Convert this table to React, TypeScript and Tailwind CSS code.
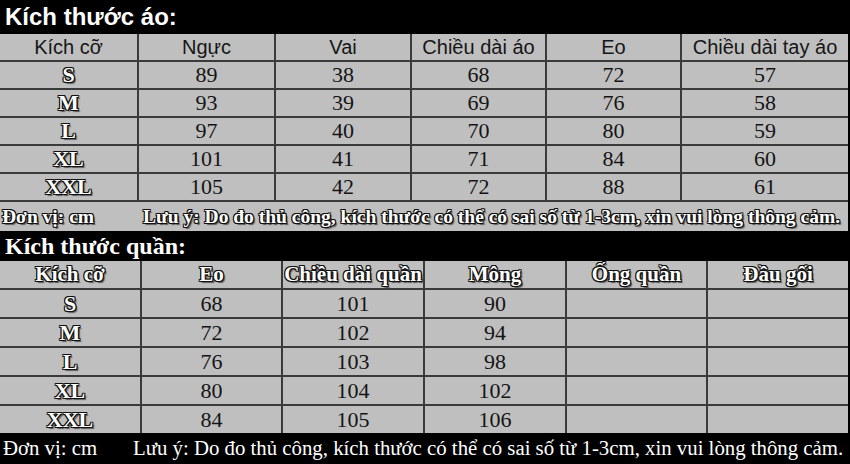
import React from "react";

const outline =
  "text-white font-bold [font-family:'Liberation_Serif',serif] [text-shadow:1px_0_0_#111,-1px_0_0_#111,0_1px_0_#111,0_-1px_0_#111,1px_1px_0_#111,-1px_-1px_0_#111,1px_-1px_0_#111,-1px_1px_0_#111,2px_2px_1px_#555]";

const shirtHead = ["Kích cỡ", "Ngực", "Vai", "Chiều dài áo", "Eo", "Chiều dài tay áo"];
const shirtRows = [
  ["S", "89", "38", "68", "72", "57"],
  ["M", "93", "39", "69", "76", "58"],
  ["L", "97", "40", "70", "80", "59"],
  ["XL", "101", "41", "71", "84", "60"],
  ["XXL", "105", "42", "72", "88", "61"],
];
const pantsHead = ["Kích cỡ", "Eo", "Chiều dài quần", "Mông", "Ống quần", "Đầu gối"];
const pantsRows = [
  ["S", "68", "101", "90", "", ""],
  ["M", "72", "102", "94", "", ""],
  ["L", "76", "103", "98", "", ""],
  ["XL", "80", "104", "102", "", ""],
  ["XXL", "84", "105", "106", "", ""],
];

export default function App() {
  return (
    <div className="w-[850px] h-[464px] bg-black overflow-hidden">
      <div className="h-[34px] flex items-center pl-[5px] text-white font-bold text-[24px] leading-none [font-family:'Liberation_Sans',Arial,sans-serif]">
        Kích thước áo:
      </div>
      <div className="w-[848px] grid grid-cols-[137px_135px_134px_133px_133px_1fr] gap-[2px] bg-[#3a3a3a]">
        {shirtHead.map((h) => (
          <div
            key={h}
            className="h-[26px] bg-[#bfbfbf] flex items-center justify-center text-[20px] leading-none text-[#161616] [font-family:'Liberation_Sans',Arial,sans-serif]"
          >
            {h}
          </div>
        ))}
        {shirtRows.map((r) =>
          r.map((c, i) => (
            <div
              key={r[0] + i}
              className={
                "h-[26px] bg-[#bfbfbf] flex items-center justify-center leading-none " +
                (i === 0
                  ? outline + " text-[22px]"
                  : "text-[22px] text-[#141414] [font-family:'Liberation_Serif',serif]")
              }
            >
              {c}
            </div>
          ))
        )}
        <div
          className={
            "col-span-6 h-[29px] bg-[#bfbfbf] flex items-center text-[19.5px] leading-none whitespace-nowrap " +
            outline
          }
        >
          <span className="pl-[2px] w-[143px]">Đơn vị: cm</span>
          <span>Lưu ý: Do đo thủ công, kích thước có thể có sai số từ 1-3cm, xin vui lòng thông cảm.</span>
        </div>
      </div>
      <div className="h-[30px] flex items-center pl-[5px] text-white font-bold text-[24px] leading-none [font-family:'Liberation_Serif',serif]">
        Kích thước quần:
      </div>
      <div className="w-[848px] grid grid-cols-[140px_139px_140px_140px_139px_1fr] gap-[2px] bg-[#3a3a3a]">
        {pantsHead.map((h) => (
          <div
            key={h}
            className={"h-[27px] bg-[#bfbfbf] flex items-center justify-center text-[21px] leading-none " + outline}
          >
            {h}
          </div>
        ))}
        {pantsRows.map((r) =>
          r.map((c, i) => (
            <div
              key={r[0] + i}
              className={
                "h-[27px] bg-[#bfbfbf] flex items-center justify-center leading-none " +
                (i === 0
                  ? outline + " text-[22px]"
                  : "text-[22px] text-[#141414] [font-family:'Liberation_Serif',serif]")
              }
            >
              {c}
            </div>
          ))
        )}
      </div>
      <div className="h-[31px] flex items-center text-white text-[20.8px] leading-none whitespace-nowrap [font-family:'Liberation_Serif',serif]">
        <span className="pl-[3px] w-[133px]">Đơn vị: cm</span>
        <span>Lưu ý: Do đo thủ công, kích thước có thể có sai số từ 1-3cm, xin vui lòng thông cảm.</span>
      </div>
    </div>
  );
}
